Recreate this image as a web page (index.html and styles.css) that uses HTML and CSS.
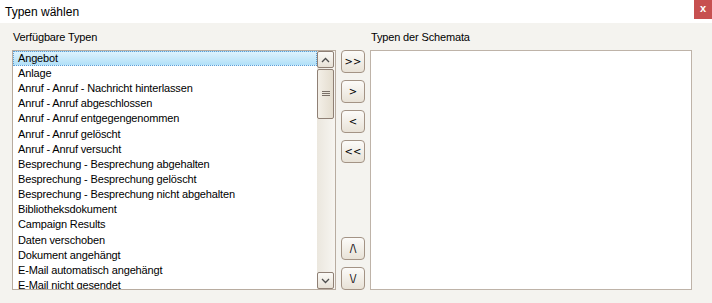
FILE: index.html
```html
<!DOCTYPE html>
<html lang="de">
<head>
    <meta charset="UTF-8">
    <title>Typen wählen</title>
    <link rel="stylesheet" href="styles.css">
</head>
<body>
    <div class="dialog">
        <div class="titlebar">
            <span class="title">Typen wählen</span>
            <span class="close">x</span>
        </div>
        <div class="content">
            <div class="label">Verfügbare Typen</div>
            <div class="label label-right">Typen der Schemata</div>

            <div class="listbox">
                <ul class="items">
                    <li class="selected">Angebot</li>
                    <li>Anlage</li>
                    <li>Anruf - Anruf - Nachricht hinterlassen</li>
                    <li>Anruf - Anruf abgeschlossen</li>
                    <li>Anruf - Anruf entgegengenommen</li>
                    <li>Anruf - Anruf gelöscht</li>
                    <li>Anruf - Anruf versucht</li>
                    <li>Besprechung - Besprechung abgehalten</li>
                    <li>Besprechung - Besprechung gelöscht</li>
                    <li>Besprechung - Besprechung nicht abgehalten</li>
                    <li>Bibliotheksdokument</li>
                    <li>Campaign Results</li>
                    <li>Daten verschoben</li>
                    <li>Dokument angehängt</li>
                    <li>E-Mail automatisch angehängt</li>
                    <li>E-Mail nicht gesendet</li>
                </ul>
                <div class="scrollbar">
                    <div class="sb-btn">
                        <svg width="9" height="6" viewBox="0 0 9 6"><path d="M1 5 L4.5 1.5 L8 5" fill="none" stroke="#4d4d4d" stroke-width="1.3"/></svg>
                    </div>
                    <div class="sb-track">
                        <div class="sb-thumb">
                            <svg width="8" height="6" viewBox="0 0 8 6"><path d="M0 0.5 H8 M0 2.5 H8 M0 4.5 H8" stroke="#7a7068" stroke-width="1"/></svg>
                        </div>
                    </div>
                    <div class="sb-btn">
                        <svg width="9" height="6" viewBox="0 0 9 6"><path d="M1 1 L4.5 4.5 L8 1" fill="none" stroke="#4d4d4d" stroke-width="1.3"/></svg>
                    </div>
                </div>
            </div>

            <div class="buttons">
                <div class="group">
                    <button class="move">&gt;&gt;</button>
                    <button class="move">&gt;</button>
                    <button class="move">&lt;</button>
                    <button class="move">&lt;&lt;</button>
                </div>
                <div class="group">
                    <button class="move">/\</button>
                    <button class="move">\/</button>
                </div>
            </div>

            <div class="listbox target"></div>
        </div>
    </div>
</body>
</html>
```

FILE: styles.css
```css
body { margin: 0; background: #f4f3ef; font-family: "Liberation Sans", Arial, sans-serif; font-size: 11px; letter-spacing: -0.15px; color: #000; }
.dialog { width: 712px; height: 303px; display: flex; flex-direction: column; }
.titlebar { height: 23px; background: #fff; display: flex; justify-content: space-between; align-items: flex-start; }
.title { padding: 5px 0 0 5px; font-size: 12px; letter-spacing: 0; }
.close { width: 18px; height: 19px; background: #c75050; color: #fff; font-weight: bold; font-size: 11px; text-align: center; line-height: 17px; }
.content { display: grid; grid-template-columns: 324px 24px 322px; grid-template-rows: 27px 240px; column-gap: 5px; padding-left: 12px; }
.label { align-self: start; padding: 8px 0 0 1px; }
.label-right { grid-column: 3; grid-row: 1; }
.listbox { grid-column: 1; grid-row: 2; border: 1px solid #b8aca0; background: #fff; display: flex; overflow: hidden; }
.listbox.target { grid-column: 3; border-color: #beb3a8; }
.items { list-style: none; margin: 0; padding: 0; flex: 1; }
.items li { height: 15.15px; line-height: 15.15px; padding-left: 5px; white-space: nowrap; box-sizing: border-box; }
.items li.selected { height: 15px; background: linear-gradient(#ddf2fd, #b1e0f8); border: 1px dotted #5e9ed6; padding-left: 4px; line-height: 13px; }
.scrollbar { width: 18px; display: flex; flex-direction: column; background: linear-gradient(to right, #ebe7de, #f7f5f1); }
.sb-btn { height: 17px; box-sizing: border-box; border: 1px solid #8f8075; border-radius: 2px; background: linear-gradient(#fbfaf7, #e7e1d6); display: flex; align-items: center; justify-content: center; margin-right: 1px; }
.sb-track { flex: 1; padding-top: 1px; }
.sb-thumb { height: 50px; box-sizing: border-box; border: 1px solid #8f8075; border-radius: 2px; background: linear-gradient(to right, #f3efe7, #e4ddcf); display: flex; align-items: center; justify-content: center; margin-right: 1px; }
.buttons { grid-column: 2; grid-row: 2; display: flex; flex-direction: column; justify-content: space-between; }
.group { display: flex; flex-direction: column; gap: 7px; }
.move { width: 24px; height: 23px; padding: 0; border: 1px solid #a39385; border-radius: 4px; background: linear-gradient(#fcfbf9, #e8e2d7); font-family: "DejaVu Sans", sans-serif; font-size: 10px; letter-spacing: 0; color: #000; }
```
